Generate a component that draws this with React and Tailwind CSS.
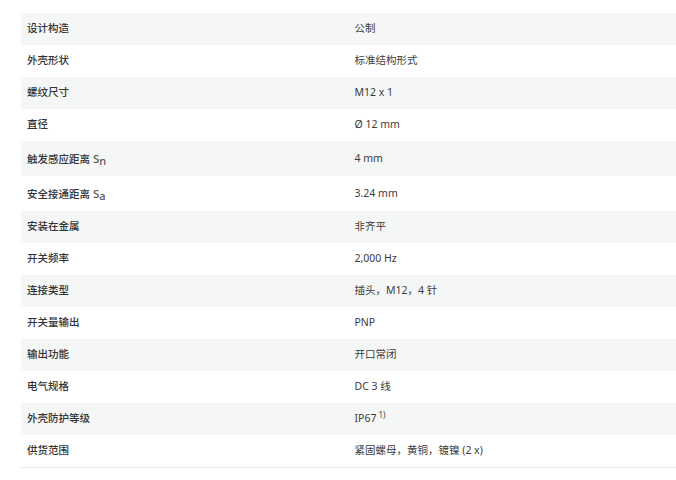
import React from 'react'

/* spec rows — tall rows carry a subscript symbol */
const ROWS = [
  { k: '设计构造', v: '公制' },
  { k: '外壳形状', v: '标准结构形式' },
  { k: '螺纹尺寸', v: 'M12 x 1' },
  { k: '直径', v: 'Ø 12 mm' },
  { k: '触发感应距离', sym: 'n', v: '4 mm' },
  { k: '安全接通距离', sym: 'a', v: '3.24 mm' },
  { k: '安装在金属', v: '非齐平' },
  { k: '开关频率', v: '2,000 Hz' },
  { k: '连接类型', v: '插头，M12，4 针' },
  { k: '开关量输出', v: 'PNP' },
  { k: '输出功能', v: '开口常闭' },
  { k: '电气规格', v: 'DC 3 线' },
  { k: '外壳防护等级', v: 'IP67', note: '1)' },
  { k: '供货范围', v: '紧固螺母，黄铜，镀镍 (2 x)' },
]

const FONT = "font-['Noto_Sans','Noto_Sans_CJK_SC',sans-serif]"

export default function App() {
  return (
    <div className={`w-[676px] h-[480px] bg-white pl-[21px] pt-[13px] ${FONT} text-[10.5px] text-[#3c3c3c]`}>
      <div className="border-b border-[#e6e8e8]">
        {ROWS.map((r, i) => (
          <div
            key={r.k}
            className={`grid grid-cols-2 items-center ${r.sym ? 'h-[35px]' : 'h-[32px]'} ${i % 2 === 0 ? 'bg-[#f5f7f7]' : 'bg-white'}`}
          >
            <div className="px-[6px] font-medium text-[#333]">
              {r.k}
              {r.sym && (
                <span className="ml-[3px] text-[11.5px] text-[#555]">
                  S<sub className="text-[11px]">{r.sym}</sub>
                </span>
              )}
            </div>
            <div className="px-[6px]">
              {r.v}
              {r.note && <sup className="ml-[2px] text-[8px]">{r.note}</sup>}
            </div>
          </div>
        ))}
      </div>
    </div>
  )
}
